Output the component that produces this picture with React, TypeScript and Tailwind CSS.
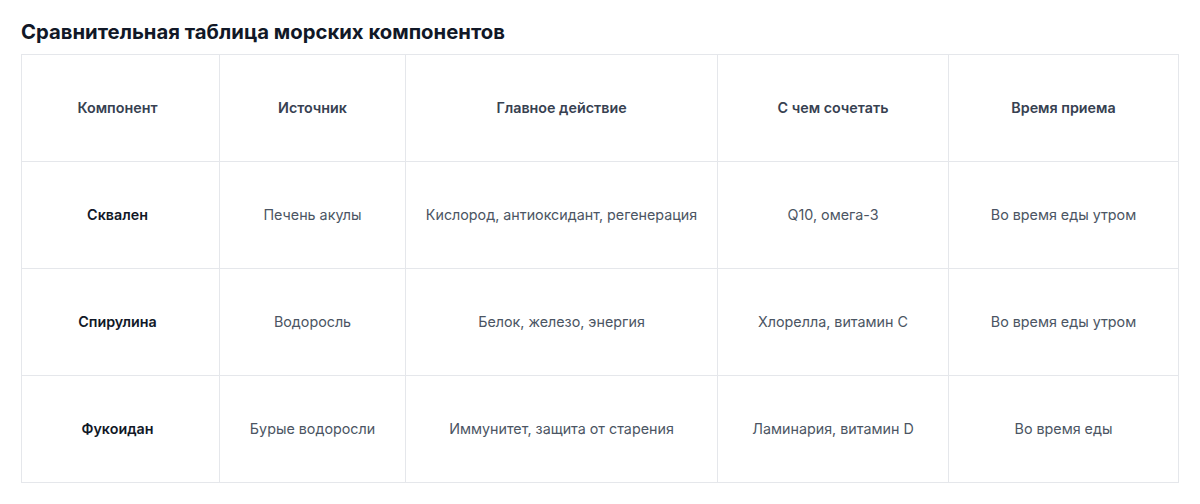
import React from "react";

const headers = ["Компонент", "Источник", "Главное действие", "С чем сочетать", "Время приема"];
const rows = [
  ["Сквален", "Печень акулы", "Кислород, антиоксидант, регенерация", "Q10, омега-3", "Во время еды утром"],
  ["Спирулина", "Водоросль", "Белок, железо, энергия", "Хлорелла, витамин С", "Во время еды утром"],
  ["Фукоидан", "Бурые водоросли", "Иммунитет, защита от старения", "Ламинария, витамин D", "Во время еды"],
];
const widths = ["w-[198px]", "w-[186px]", "w-[312px]", "w-[231px]", "w-[230px]"];

export default function App() {
  return (
    <div className="bg-white w-[1200px] h-[504px] px-[21px] pt-[20px]" style={{ fontFamily: "Inter, 'Noto Sans', sans-serif" }}>
      <h2 className="text-[20.3px] leading-[24px] font-bold text-[#111827] mb-[10px]">Сравнительная таблица морских компонентов</h2>
      <table className="table-fixed border-collapse w-[1158px]">
        <colgroup>
          {widths.map((w, i) => (
            <col key={i} className={w} />
          ))}
        </colgroup>
        <thead>
          <tr className="h-[107px]">
            {headers.map((h, i) => (
              <th
                key={h}
                className={
                  "border border-[#e5e7eb] text-center text-[14.3px] font-semibold text-[#374151] " +
                  (i === 0 ? "pl-2 pr-[14px]" : "px-2")
                }
              >
                {h}
              </th>
            ))}
          </tr>
        </thead>
        <tbody>
          {rows.map((r) => (
            <tr key={r[0]} className="h-[107px]">
              {r.map((c, i) => (
                <td
                  key={i}
                  className={
                    "border border-[#e5e7eb] text-center text-[14.3px] " +
                    (i === 0 ? "pl-2 pr-[14px] font-semibold text-[#111827]" : "px-2 text-[#4b5563]")
                  }
                >
                  {c}
                </td>
              ))}
            </tr>
          ))}
        </tbody>
      </table>
    </div>
  );
}
